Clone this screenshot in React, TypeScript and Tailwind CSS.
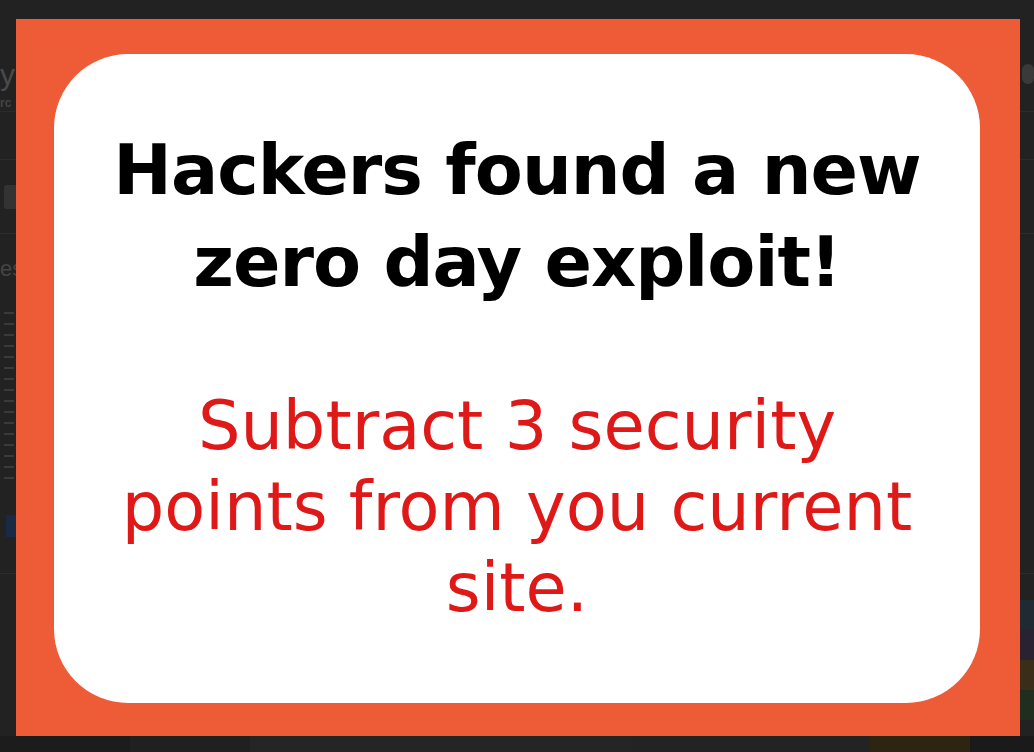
import React from "react";

function BackgroundPage() {
  return (
    <div
      className="w-full h-full bg-[#222222] flex flex-col overflow-hidden"
      style={{ fontFamily: '"Liberation Sans", Arial, sans-serif' }}
    >
      <div className="h-[112px] flex items-start justify-between pt-[58px] border-b border-[#2c2c2c]">
        <div className="flex flex-col">
          <span className="text-[30px] leading-[34px] text-[#4a4a4a]">y</span>
          <span className="text-[12px] leading-[14px] text-[#444] font-bold mt-[4px]">rc</span>
        </div>
        <div className="w-[12px] h-[20px] rounded-full bg-[#3a3a3a] mt-[6px]" />
      </div>
      <div className="h-[48px] border-b border-[#2c2c2c]" />
      <div className="h-[74px] flex items-center border-b border-[#2d2d2d] pl-[4px]">
        <div className="w-[14px] h-[24px] rounded-[3px] bg-[#333]" />
      </div>
      <div className="h-[340px] flex flex-col pt-[22px] border-b border-[#2c2c2c]">
        <span className="text-[22px] leading-[26px] text-[#444]">es</span>
        <div className="flex flex-col gap-[9px] mt-[30px] pl-[4px]">
          {Array.from({ length: 16 }).map((_, i) => (
            <div key={i} className="w-[10px] h-[2px] bg-[#3a3a3a]" />
          ))}
        </div>
        <div className="w-[12px] h-[22px] bg-[#1b2a44] ml-[6px] mt-[36px]" />
      </div>
      <div className="flex-1 flex justify-end items-end">
        <div className="flex flex-col w-[14px] mb-[16px]">
          <div className="h-[30px] bg-[#1f2a33]" />
          <div className="h-[30px] bg-[#282233]" />
          <div className="h-[30px] bg-[#3a2d1a]" />
          <div className="h-[30px] bg-[#1f2e1f]" />
        </div>
      </div>
      <div className="h-[16px] flex">
        <div className="w-[130px] bg-[#1c1c1c]" />
        <div className="w-[120px] bg-[#202020]" />
        <div className="w-[380px] bg-[#252525]" />
        <div className="w-[240px] bg-[#232323]" />
        <div className="w-[100px] bg-[#2e2412]" />
        <div className="flex-1 bg-[#1a1a1a]" />
      </div>
    </div>
  );
}

export default function App() {
  return (
    <div className="relative w-full h-[752px] overflow-hidden bg-[#222222]">
      <BackgroundPage />
      <div className="absolute inset-0 pt-[19px] pl-[16px] pr-[14px] pb-[16px] flex">
        <div className="flex-1 bg-[#EE5B37] pt-[35px] pl-[38px] pr-[40px] pb-[33px] flex">
          <div
            className="flex-1 bg-white rounded-[74px] flex flex-col items-center text-center pt-[70px]"
            style={{ fontFamily: '"DejaVu Sans", "Noto Sans", sans-serif' }}
          >
            <div className="text-black font-bold text-[70px] leading-[92px] tracking-[-1px]">
              Hackers found a new
              <br />
              zero day exploit!
            </div>
            <div className="mt-[78px] text-[#DF1818] font-normal text-[67px] leading-[81px]">
              Subtract 3 security
              <br />
              points from you current
              <br />
              site.
            </div>
          </div>
        </div>
      </div>
    </div>
  );
}
